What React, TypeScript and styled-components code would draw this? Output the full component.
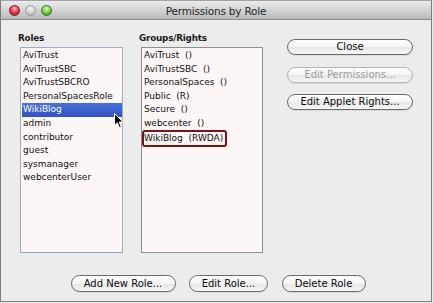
import React from "react";
import styled, { createGlobalStyle } from "styled-components";

const GlobalStyle = createGlobalStyle`
  html, body {
    margin: 0;
    padding: 0;
    background: #e9e9e9;
    font-family: "DejaVu Sans", "Liberation Sans", sans-serif;
  }
`;

const Window = styled.div`
  width: 432px;
  height: 302px;
  box-sizing: border-box;
  border: 1px solid #7c7c7c;
  border-top-color: #a3a3a3;
  background: #ececec;
  display: flex;
  flex-direction: column;
  overflow: hidden;
`;

const TitleBar = styled.header`
  height: 19px;
  box-sizing: border-box;
  border-bottom: 1px solid #8d8d8d;
  background: linear-gradient(#ececec, #d6d6d6 45%, #bababa);
  display: grid;
  grid-template-columns: 1fr auto 1fr;
  align-items: center;
`;

const Lights = styled.div`
  display: flex;
  align-items: center;
  gap: 5px;
  padding-left: 8px;
`;

interface LightProps {
  tone: "red" | "gray" | "green";
}

const lightColors = {
  red: ["#ffb3bf", "#e1283f", "#8d0f1f"],
  gray: ["#f3f3f3", "#cfcfcf", "#9c9c9c"],
  green: ["#d9ffc0", "#66c43a", "#2f7a16"],
};

const Light = styled.span<LightProps>`
  width: 11px;
  height: 11px;
  border-radius: 50%;
  box-sizing: border-box;
  border: 1px solid ${({ tone }) => lightColors[tone][2]};
  background: radial-gradient(
    circle at 50% 30%,
    ${({ tone }) => lightColors[tone][0]} 0,
    ${({ tone }) => lightColors[tone][1]} 60%,
    ${({ tone }) => lightColors[tone][2]} 100%
  );
`;

const Title = styled.div`
  font-size: 10.5px;
  color: #262626;
  letter-spacing: -0.2px;
  padding-top: 1px;
`;

const Body = styled.main`
  flex: 1;
  display: flex;
  flex-direction: column;
  padding-top: 12px;
`;

const TopRow = styled.div`
  display: flex;
  padding-left: 17px;
`;

interface ColumnProps {
  w: number;
}

const Column = styled.section<ColumnProps>`
  width: ${({ w }) => w}px;
  display: flex;
  flex-direction: column;
  margin-right: 16px;
`;

const Label = styled.div`
  font-size: 8.8px;
  font-weight: bold;
  line-height: 13px;
  height: 13px;
  color: #1c1c1c;
  letter-spacing: -0.2px;
`;

const List = styled.ul`
  position: relative;
  list-style: none;
  margin: 2px 0 0 2px;
  padding: 1px 0 0 0;
  height: 206px;
  box-sizing: border-box;
  background: #fdf6f6;
  border: 1px solid #8e8e8e;
`;

const RolesList = styled(List)`
  border-color: #a2acbb;
  border-bottom-color: #8da3c9;
`;

interface ItemProps {
  selected?: boolean;
}

const Item = styled.li<ItemProps>`
  height: 13.6px;
  line-height: 13.6px;
  margin-left: 1px;
  margin-right: 0;
  padding-left: 1px;
  font-size: 9px;
  white-space: pre;
  color: ${({ selected }) => (selected ? "#ffffff" : "#111111")};
  background: ${({ selected }) =>
    selected ? "linear-gradient(#4870d8, #2f54c2)" : "transparent"};
`;

const Marked = styled.span`
  display: inline-block;
  margin: -1px 0 0 -2px;
  padding: 0 2px 0 0;
  line-height: 13px;
  border: 2px solid #7a1414;
  border-radius: 3px;
`;

const Cursor = styled.svg`
  position: absolute;
  left: 93px;
  top: 65px;
`;

const Buttons = styled.div`
  display: flex;
  flex-direction: column;
  gap: 11.5px;
  margin-left: 8px;
  padding-top: 7px;
`;

interface ButtonProps {
  w: number;
  disabled?: boolean;
}

const Button = styled.button<ButtonProps>`
  width: ${({ w }) => w}px;
  height: 16px;
  padding: 0;
  box-sizing: border-box;
  border-radius: 9px;
  border: 1px solid ${({ disabled }) => (disabled ? "#b4b4b4" : "#6a6a6a")};
  background: linear-gradient(#ffffff, #f4f4f4 50%, #e6e6e6 51%, #f7f7f7);
  font-family: "DejaVu Sans", "Liberation Sans", sans-serif;
  font-size: 10px;
  line-height: 14px;
  color: ${({ disabled }) => (disabled ? "#9b9b9b" : "#0a0a0a")};
  box-shadow: 0 1px 0 rgba(0, 0, 0, 0.08);
`;

const BottomRow = styled.div`
  display: flex;
  justify-content: center;
  gap: 13.5px;
  margin-top: 22px;
  padding-left: 4px;

  & > button {
    height: 17px;
  }
`;

const roles = [
  "AviTrust",
  "AviTrustSBC",
  "AviTrustSBCRO",
  "PersonalSpacesRole",
  "WikiBlog",
  "admin",
  "contributor",
  "guest",
  "sysmanager",
  "webcenterUser",
];

const groups = [
  "AviTrust  ()",
  "AviTrustSBC  ()",
  "PersonalSpaces  ()",
  "Public  (R)",
  "Secure  ()",
  "webcenter  ()",
];

export default function App() {
  return (
    <>
      <GlobalStyle />
      <Window>
        <TitleBar>
          <Lights>
            <Light tone="red" />
            <Light tone="gray" />
            <Light tone="green" />
          </Lights>
          <Title>Permissions by Role</Title>
          <div />
        </TitleBar>
        <Body>
          <TopRow>
            <Column w={105}>
              <Label>Roles</Label>
              <RolesList>
                {roles.map((r) => (
                  <Item key={r} selected={r === "WikiBlog"}>
                    {r}
                  </Item>
                ))}
                <Cursor width="10" height="16" viewBox="0 0 10 16">
                  <path
                    d="M0.5 0.5 L0.5 12.5 L3.3 9.8 L5.4 14.6 L7.3 13.8 L5.2 9.1 L9 9.1 Z"
                    fill="#000"
                    stroke="#fff"
                    strokeWidth="1"
                    strokeLinejoin="round"
                  />
                </Cursor>
              </RolesList>
            </Column>
            <Column w={124}>
              <Label>Groups/Rights</Label>
              <List>
                {groups.map((g) => (
                  <Item key={g}>{g}</Item>
                ))}
                <Item>
                  <Marked>WikiBlog  (RWDA)</Marked>
                </Item>
              </List>
            </Column>
            <Buttons>
              <Button w={126}>Close</Button>
              <Button w={126} disabled>
                Edit Permissions...
              </Button>
              <Button w={126}>Edit Applet Rights...</Button>
            </Buttons>
          </TopRow>
          <BottomRow>
            <Button w={105}>Add New Role...</Button>
            <Button w={79}>Edit Role...</Button>
            <Button w={84}>Delete Role</Button>
          </BottomRow>
        </Body>
      </Window>
    </>
  );
}
